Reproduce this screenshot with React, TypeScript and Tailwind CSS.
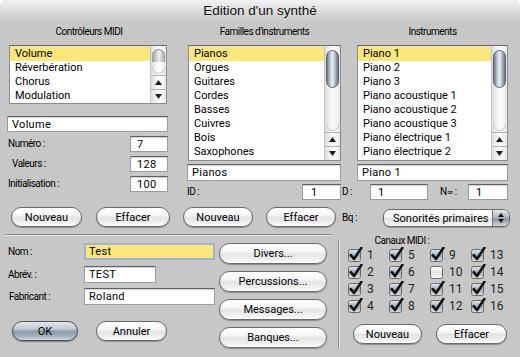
import React from "react";

const BTN =
  "flex h-[20px] items-center justify-center rounded-full border border-[#6a6a6a] bg-[linear-gradient(to_bottom,#ffffff_0%,#f6f6f6_40%,#e4e4e4_52%,#eeeeee_80%,#fdfdfd_100%)] shadow-[0_1px_1px_rgba(0,0,0,0.3)] text-[11px] leading-none text-black";
const BTN_DEF =
  "flex h-[20px] items-center justify-center rounded-full border border-[#4a525c] bg-[linear-gradient(to_bottom,#e4e8ec_0%,#bfc7d0_40%,#8f9bab_52%,#a6b1be_80%,#d6dce3_100%)] shadow-[0_1px_1px_rgba(0,0,0,0.35)] text-[11px] leading-none text-black";
const FIELD =
  "flex items-center bg-white border border-[#9c9c9c] border-t-[#5f5f5f] shadow-[inset_0_1px_1px_rgba(0,0,0,0.18)] pl-[4px] text-[11px] leading-none tracking-[0.3px] text-black";
const LABEL = "text-[10px] leading-none tracking-[-0.5px] text-black";

function Arrow({ up }: { up: boolean }) {
  return (
    <svg width="7" height="5" viewBox="0 0 7 5">
      <polygon points={up ? "3.5,0 7,5 0,5" : "0,0 7,0 3.5,5"} fill="#1e1e1e" />
    </svg>
  );
}

function Scrollbar({ thumb }: { thumb: boolean }) {
  return (
    <div className="flex h-full w-[16px] shrink-0 flex-col border-l border-[#c4c4c4] bg-[linear-gradient(to_right,#dedede,#f6f6f6_40%,#fbfbfb_60%,#e8e8e8)]">
      <div className="relative flex-1">
        {thumb ? (
          <div className="absolute left-[1px] right-[1px] top-[4px] h-[38px] rounded-full border border-[#58636f] bg-[linear-gradient(to_right,#6c7986,#c3ccd6_30%,#e9edf1_50%,#a9b4c0_75%,#6a7683)]" />
        ) : (
          <div className="absolute left-[1px] right-[1px] top-[3px] h-[13px] rounded-t-full border border-b-0 border-[#9a9a9a] bg-[linear-gradient(to_right,#a9a9a9,#e0e0e0_45%,#f0f0f0_55%,#b3b3b3)]" />
        )}
        <div className="absolute bottom-[1px] left-[1px] right-[1px] h-[7px] rounded-b-full border border-t-0 border-[#c2c2c2]" />
      </div>
      <div className="flex h-[14px] items-center justify-center border-t border-[#b3b3b3]">
        <Arrow up={true} />
      </div>
      <div className="flex h-[14px] items-center justify-center border-t border-[#b3b3b3]">
        <Arrow up={false} />
      </div>
    </div>
  );
}

function ListBox({
  items,
  cls,
  thumb,
}: {
  items: string[];
  cls: string;
  thumb: boolean;
}) {
  return (
    <div
      className={
        "flex border border-[#8c8c8c] border-t-[#6a6a6a] bg-white shadow-[inset_0_1px_1px_rgba(0,0,0,0.15)] " +
        cls
      }
    >
      <div className="flex flex-1 flex-col pt-[1px]">
        {items.map((t, i) => (
          <div
            key={t}
            className={
              "h-[14px] shrink-0 pl-[5px] text-[11px] leading-[14px] text-black " +
              (i === 0 ? "bg-[#f9e77a]" : "")
            }
          >
            {t}
          </div>
        ))}
      </div>
      <Scrollbar thumb={thumb} />
    </div>
  );
}

function Check({ on, id }: { on: boolean; id: string }) {
  return (
    <svg width="15" height="15" viewBox="0 0 15 15" className="shrink-0">
      <defs>
        <linearGradient id={id} x1="0" y1="0" x2="0" y2="1">
          {on ? (
            <>
              <stop offset="0" stopColor="#e3e8ed" />
              <stop offset="0.5" stopColor="#a3afbc" />
              <stop offset="1" stopColor="#d9dfe6" />
            </>
          ) : (
            <>
              <stop offset="0" stopColor="#ffffff" />
              <stop offset="0.5" stopColor="#e3e3e3" />
              <stop offset="1" stopColor="#f7f7f7" />
            </>
          )}
        </linearGradient>
      </defs>
      <rect x="0.5" y="2.5" width="12" height="12" rx="2" fill={`url(#${id})`} stroke="#6a6a6a" />
      {on && (
        <path
          d="M2.8 8.2 L6 12 L13.4 0.9"
          fill="none"
          stroke="#111"
          strokeWidth="2.6"
          strokeLinecap="round"
          strokeLinejoin="round"
        />
      )}
    </svg>
  );
}

const channels = [1, 5, 9, 13, 2, 6, 10, 14, 3, 7, 11, 15, 4, 8, 12, 16];

export default function App() {
  return (
    <div className="h-[357px] w-[520px] bg-white font-['Roboto',Arial,sans-serif]">
      <div className="flex h-full w-full flex-col overflow-hidden rounded-t-[7px] bg-[#c7c7c7]">
        {/* title bar */}
        <div className="flex h-[22px] shrink-0 items-center justify-center bg-[linear-gradient(to_bottom,#f2f2f2,#dcdcdc_50%,#c8c8c8)] font-['Liberation_Sans',Arial,sans-serif] text-[13.5px] leading-none text-[#111]">
          Edition d'un synthé
        </div>

        {/* top section */}
        <div className="flex h-[205px] shrink-0">
          {/* col 1 */}
          <div className="ml-[7px] flex w-[164px] flex-col">
            <div className={"mt-[5px] h-[12px] text-center leading-[12px] " + LABEL}>Contrôleurs MIDI</div>
            <ListBox
              items={["Volume", "Réverbération", "Chorus", "Modulation"]}
              cls="ml-[2px] mt-[6px] h-[59px] w-[158px]"
              thumb={false}
            />
            <div className={"mt-[12px] h-[16px] w-[161px] " + FIELD}>Volume</div>
            <div className="mt-[4px] flex h-[16px] w-[161px] items-center justify-between">
              <span className={"pl-[1px] " + LABEL}>Numéro :</span>
              <div className={"h-[16px] w-[38px] pl-[6px] " + FIELD}>7</div>
            </div>
            <div className="mt-[4px] flex h-[16px] w-[161px] items-center justify-between">
              <span className={"pl-[5px] " + LABEL}>Valeurs :</span>
              <div className={"h-[16px] w-[38px] pl-[6px] " + FIELD}>128</div>
            </div>
            <div className="mt-[4px] flex h-[16px] w-[161px] items-center justify-between">
              <span className={"pl-[1px] " + LABEL}>Initialisation :</span>
              <div className={"h-[16px] w-[38px] pl-[6px] " + FIELD}>100</div>
            </div>
            <div className="ml-[4px] mt-[15px] flex gap-[14px]">
              <div className={"w-[71px] " + BTN}>Nouveau</div>
              <div className={"w-[74px] " + BTN}>Effacer</div>
            </div>
          </div>

          {/* col 2 */}
          <div className="ml-[12px] flex w-[159px] flex-col">
            <div className={"ml-[5px] mt-[5px] h-[12px] w-[153px] text-center leading-[12px] " + LABEL}>
              Familles d'instruments
            </div>
            <ListBox
              items={["Pianos", "Orgues", "Guitares", "Cordes", "Basses", "Cuivres", "Bois", "Saxophones"]}
              cls="ml-[5px] mt-[6px] h-[116px] w-[153px]"
              thumb={true}
            />
            <div className={"ml-[4px] mt-[3px] h-[17px] w-[154px] " + FIELD}>Pianos</div>
            <div className="ml-[4px] mt-[3px] flex h-[16px] w-[154px] items-center justify-between">
              <span className={LABEL}>ID :</span>
              <div className={"h-[16px] w-[39px] pl-[8px] " + FIELD}>1</div>
            </div>
            <div className="mt-[7px] flex gap-[13px]">
              <div className={"w-[70px] " + BTN}>Nouveau</div>
              <div className={"w-[70px] " + BTN}>Effacer</div>
            </div>
          </div>

          {/* col 3 */}
          <div className="flex w-[170px] flex-col">
            <div className={"ml-[15px] mt-[5px] h-[12px] w-[151px] text-center leading-[12px] " + LABEL}>
              Instruments
            </div>
            <ListBox
              items={[
                "Piano 1",
                "Piano 2",
                "Piano 3",
                "Piano acoustique 1",
                "Piano acoustique 2",
                "Piano acoustique 3",
                "Piano électrique 1",
                "Piano électrique 2",
              ]}
              cls="ml-[15px] mt-[6px] h-[116px] w-[151px]"
              thumb={true}
            />
            <div className={"ml-[15px] mt-[3px] h-[17px] w-[151px] " + FIELD}>Piano 1</div>
            <div className="mt-[3px] flex h-[16px] items-center">
              <span className={"w-[28px] " + LABEL}>D :</span>
              <div className={"h-[16px] w-[58px] pl-[7px] " + FIELD}>1</div>
              <span className={"w-[40px] pl-[12px] " + LABEL}>
                N<span className="font-['DejaVu_Sans',sans-serif] text-[8px]">∞</span> :
              </span>
              <div className={"h-[16px] w-[40px] pl-[7px] " + FIELD}>1</div>
            </div>
            <div className="mt-[9px] flex h-[18px] items-center">
              <span className={"w-[41px] " + LABEL}>Bq :</span>
              <div className="flex h-[18px] w-[127px] items-center overflow-hidden rounded-[7px] border border-[#6a6a6a] bg-[linear-gradient(to_bottom,#ffffff_0%,#f4f4f4_45%,#e2e2e2_55%,#f6f6f6_100%)] shadow-[0_1px_1px_rgba(0,0,0,0.25)]">
                <span className="flex-1 pl-[9px] text-[11px] leading-none text-black">Sonorités primaires</span>
                <div className="flex h-full w-[17px] flex-col items-center justify-center gap-[2px] border-l border-[#6b7581] bg-[linear-gradient(to_bottom,#e2e7ec,#a7b2bf_50%,#8694a3_55%,#cdd4dc)]">
                  <svg width="6" height="4" viewBox="0 0 6 4">
                    <polygon points="3,0 6,4 0,4" fill="#111" />
                  </svg>
                  <svg width="6" height="4" viewBox="0 0 6 4">
                    <polygon points="0,0 6,0 3,4" fill="#111" />
                  </svg>
                </div>
              </div>
            </div>
          </div>
        </div>

        {/* bottom section */}
        <div className="flex flex-1">
          {/* left */}
          <div className="ml-[5px] flex w-[327px] flex-col">
            <div className="mt-[7px] h-[2px] border-t border-b border-t-[#8a8a8a] border-b-[#e6e6e6]" />
            <div className="flex">
              <div className="flex w-[210px] flex-col">
                <div className="mt-[7px] flex h-[17px] items-center">
                  <span className={"w-[79px] pl-[3px] " + LABEL}>Nom :</span>
                  <div className="flex h-[17px] w-[131px] items-center border-2 border-[#9fb4d4] bg-[#f9e77a] pl-[3px] text-[11px] leading-none tracking-[0.3px] text-black">
                    Test
                  </div>
                </div>
                <div className="mt-[6px] flex h-[17px] items-center">
                  <span className={"w-[79px] pl-[3px] " + LABEL}>Abrév. :</span>
                  <div className={"h-[17px] w-[72px] " + FIELD}>TEST</div>
                </div>
                <div className="mt-[5px] flex h-[17px] items-center">
                  <span className={"w-[79px] pl-[4px] " + LABEL}>Fabricant :</span>
                  <div className={"h-[17px] w-[131px] " + FIELD}>Roland</div>
                </div>
                <div className="ml-[7px] mt-[16px] flex gap-[18px]">
                  <div className={"w-[66px] " + BTN_DEF}>OK</div>
                  <div className={"w-[71px] " + BTN}>Annuler</div>
                </div>
              </div>
              <div className="ml-[4px] mt-[7px] flex w-[108px] flex-col gap-[7px]">
                <div className={"h-[21px] " + BTN}>Divers...</div>
                <div className={"h-[21px] " + BTN}>Percussions...</div>
                <div className={"h-[21px] " + BTN}>Messages...</div>
                <div className={"h-[21px] " + BTN}>Banques...</div>
              </div>
            </div>
          </div>

          {/* vertical separator */}
          <div className="ml-[6px] mt-[13px] h-[108px] w-[2px] border-l border-r border-l-[#8a8a8a] border-r-[#e6e6e6]" />

          {/* right */}
          <div className="flex flex-1 flex-col">
            <div className={"mt-[9px] h-[10px] w-[124px] text-center " + LABEL}>Canaux MIDI :</div>
            <div className="ml-[8px] grid grid-cols-[repeat(4,41px)]">
              {channels.map((n) => (
                <div key={n} className="flex h-[17px] items-center gap-[4px]">
                  <Check on={n !== 10} id={"cb" + n} />
                  <span className="text-[12px] leading-none text-[#222]">{n}</span>
                </div>
              ))}
            </div>
            <div className="ml-[13px] mt-[10px] flex gap-[14px]">
              <div className={"w-[69px] " + BTN}>Nouveau</div>
              <div className={"w-[71px] " + BTN}>Effacer</div>
            </div>
          </div>
        </div>
      </div>
    </div>
  );
}
